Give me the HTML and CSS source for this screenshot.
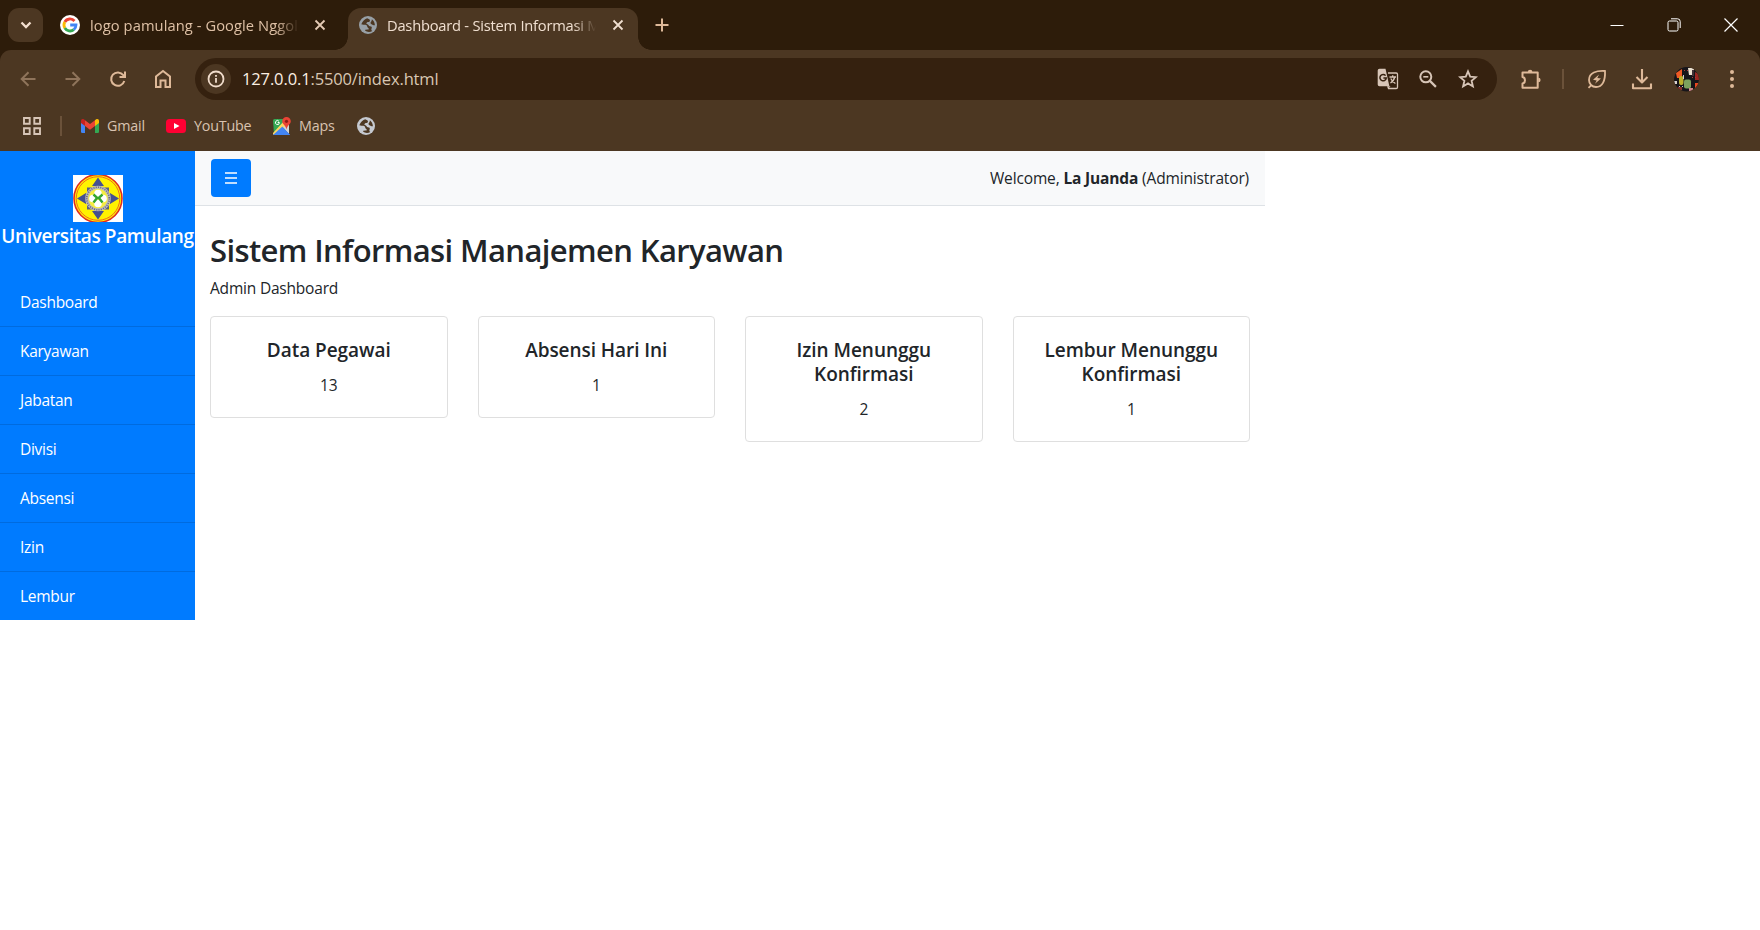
FILE: index.html
```
<!DOCTYPE html>
<html lang="id">
<head>
<meta charset="utf-8">
<title>Dashboard - Sistem Informasi Manajemen Karyawan</title>
<link rel="stylesheet" href="styles.css">
</head>
<body>
<svg width="0" height="0" class="defs">
  <symbol id="globe" viewBox="0 0 18 18">
    <circle cx="9" cy="9" r="9" fill="currentColor"/>
    <path class="land" d="M8.200 2.200C6 3 3.600 4.800 2.300 8.200c1.600.9 3.600 0 5 .8 1.300.8.500 2.300 1.900 2.900.9.400.700 1.500-.2 1.700-1.500.1-2.400.1-3.100.7 1.900 1.900 5 2.300 7.400.6-1-.6-1.200-1.500-.7-2.500.700-1.300-.2-2.200-1.700-2.200-1.400 0-1.300-1.700-2.400-1.900-1-.2-1.700-.8-.6-1.800 1-.8 2.500-.2 3-1.500.300-1-.3-2-2.700-2.800z"/>
    <path class="land" d="M12.900 3.300c-.1 1.500-.5 2.400-1.300 3.200-.6.700.4 1.600 1.300 1.900 1 .3 1.500 1.200 3 .9-.1-2.500-1.200-4.600-3-6z"/>
  </symbol>
</svg>
<div class="browser">
  <div class="tabstrip">
    <div class="tab-search"><svg width="12" height="8" viewBox="0 0 12 8"><path d="M1.500 1.500 6 6l4.500-4.500" fill="none" stroke="#f3dfcf" stroke-width="2.300"/></svg></div>
    <div class="tab tab-back">
      <svg class="favicon" width="20" height="20" viewBox="0 0 20 20"><circle cx="10" cy="10" r="10" fill="#fff"/><g fill="none" stroke-width="2.800"><path d="M14.500 6A6 6 0 0 0 4.800 7" stroke="#ea4335"/><path d="M4.800 7a6 6 0 0 0 0 6" stroke="#fbbc05"/><path d="M4.800 13a6 6 0 0 0 9 1.600" stroke="#34a853"/><path d="M13.800 14.600A6 6 0 0 0 16 10h-5.800" stroke="#4285f4"/></g></svg>
      <span class="tab-title">logo pamulang - Google Nggoleki</span>
      <svg class="close" width="12" height="12" viewBox="0 0 12 12"><path d="m1.500 1.500 9 9m0-9-9 9" stroke="currentColor" stroke-width="1.800"/></svg>
    </div>
    <div class="tab tab-active">
      <svg class="favicon globe" width="18" height="18"><use href="#globe"/></svg>
      <span class="tab-title">Dashboard - Sistem Informasi Manajemen</span>
      <svg class="close" width="12" height="12" viewBox="0 0 12 12"><path d="m1.500 1.500 9 9m0-9-9 9" stroke="currentColor" stroke-width="1.800"/></svg>
    </div>
    <svg class="new-tab" width="14" height="14" viewBox="0 0 14 14"><path d="M7 .5v13M.5 7h13" stroke="#deb999" stroke-width="2"/></svg>
    <div class="window-controls">
      <div><svg width="14" height="14" viewBox="0 0 14 14"><path d="M.5 7.500h13" stroke="#fff"/></svg></div>
      <div><svg width="14" height="14" viewBox="0 0 14 14" fill="none" stroke="#fff"><rect x="1" y="3" width="10" height="10" rx="1.500"/><path d="M4 .8h6.500a2.700 2.700 0 0 1 2.700 2.700V10"/></svg></div>
      <div><svg width="14" height="14" viewBox="0 0 14 14"><path d="m.5.500 13 13m0-13-13 13" stroke="#fff" stroke-width="1.200"/></svg></div>
    </div>
  </div>

  <div class="toolbar">
    <div class="tool dim"><svg width="16" height="16" viewBox="0 0 16 16"><path d="M15.500 8H2M8.500 1.200 1.700 8l6.800 6.800"/></svg></div>
    <div class="tool dim"><svg width="16" height="16" viewBox="0 0 16 16"><path d="M.5 8H14M7.500 1.200 14.300 8l-6.800 6.800"/></svg></div>
    <div class="tool"><svg width="18" height="18" viewBox="0 0 18 18"><path d="M15.300 11A6.700 6.700 0 1 1 14.300 5.200L15.800 7M16 1.500V7h-5.500"/></svg></div>
    <div class="tool"><svg width="18" height="20" viewBox="0 0 18 20"><path d="M2 18V7.500L9 2l7 5.500V18h-4.500v-6.500h-5V18z"/></svg></div>
    <div class="omnibox">
      <div class="site-info"><svg width="18" height="18" viewBox="0 0 18 18"><circle cx="9" cy="9" r="7.500" fill="none" stroke="#f0dccb" stroke-width="1.800"/><path d="M9 8v4.800M9 4.900v1.800" stroke="#f0dccb" stroke-width="1.800"/></svg></div>
      <span class="url"><b>127.0.0.1</b>:5500/index.html</span>
      <div class="omni-tool"><svg width="22" height="22" viewBox="0 0 22 22"><path d="M11 5h8.200a1.300 1.300 0 0 1 1.300 1.300v12.900a1.300 1.300 0 0 1-1.300 1.300H11" fill="none" stroke="#d7c5b7" stroke-width="1.300"/><path d="M2.500.7h6l3.900 17.600H2.500A1.800 1.800 0 0 1 .7 16.500V2.500A1.800 1.800 0 0 1 2.500.7z" fill="#d7c5b7"/><path d="M10 18.300h3.500L11 21z" fill="#d7c5b7"/><path d="M8.600 7.600a3.200 3.200 0 1 0 .7 2.400H6.400" fill="none" stroke="#35210f" stroke-width="1.500"/><path d="M12.500 9h6.500M15.700 7.300V9M17.700 9c-.6 2.800-2.200 4.800-4.300 6M13.800 10.500c.9 2 2.400 3.800 4.600 5" fill="none" stroke="#d7c5b7" stroke-width="1.300"/></svg></div>
      <div class="omni-tool"><svg width="18" height="18" viewBox="0 0 18 18" fill="none" stroke="#d7c5b7"><circle cx="6.800" cy="6.800" r="5.500" stroke-width="2"/><path d="m10.900 10.900 6 6" stroke-width="2.200"/><path d="M4.300 6.800h5" stroke-width="1.600"/></svg></div>
      <div class="omni-tool"><svg width="20" height="20" viewBox="0 0 20 20"><path d="m10 2.300 2.200 5.300 5.700.5-4.300 3.700 1.300 5.600-4.900-3-4.900 3 1.300-5.600L2.100 8.100l5.700-.5z" fill="none" stroke="#d7c5b7" stroke-width="1.800"/></svg></div>
    </div>
    <div class="tool extensions"><svg width="22" height="22" viewBox="0 0 22 22"><path d="M2.500 4.500h15.200v15.200H2.500v-4.200c3.300-.6 3.300-6 0-6.600z" stroke-linejoin="round"/><path d="M7.800 4a2.300 2.300 0 0 1 4.600 0zM18.300 9.700a2.300 2.300 0 0 1 0 4.600z" fill="#deb999" stroke="none"/></svg></div>
    <div class="separator"></div>
    <div class="tool"><svg width="20" height="20" viewBox="0 0 20 20"><path d="M18 2C9.500 1.500 2 3.500 2 11c0 4 3 7 7 7 6.500 0 9.500-6.500 9-16zM1.500 18.800l3-2.800" stroke-width="1.800"/><path d="m12 5.500-6 5.300 3.700.6L8 14.800l6-5.300-3.700-.6z" fill="#deb999" stroke="none"/></svg></div>
    <div class="tool"><svg width="22" height="22" viewBox="0 0 22 22"><path d="M11 1v13M5.500 9l5.500 5.500L16.500 9M2 15.500v4.800h18v-4.800" stroke-width="2.100" stroke-linejoin="round"/></svg></div>
    <div class="tool"><svg class="avatar" width="25" height="25" viewBox="0 0 25 25" stroke="none"><rect width="25" height="25" fill="#17151a"/><path d="M2 6 8 2v9H3z" fill="#ee5a24"/><path d="M14 1h6v7h-5z" fill="#eee3d2"/><path d="M21 5l4 2v6h-4z" fill="#9b2722"/><rect x="5" y="9" width="4.500" height="9" rx="2" fill="#bcae2c"/><rect x="10" y="12.500" width="7" height="9" rx="2" fill="#7da15e"/><path d="M21 16h4v4l-4 3z" fill="#e84820"/><path d="M0 14h3v3H0z" fill="#d8d2cf"/><path d="M4 20h4v3H4z" fill="#8f302d"/><path d="M15 21h4v3h-4z" fill="#d0878a"/><path d="M18 3h2v6h-2z" fill="#413238"/><path d="M10 3h1v1h-1zm3 0h1v1h-1zM18 10h1v1h-1zm3 0h1v1h-1z" fill="#a93736"/><path d="M9 8h1v4H9zM5 19h1v1H5zm3 0h1v1H8z" fill="#ccc"/></svg></div>
    <div class="tool"><svg width="4" height="18" viewBox="0 0 4 18" fill="#deb999" stroke="none"><circle cx="2" cy="2" r="2"/><circle cx="2" cy="9" r="2"/><circle cx="2" cy="16" r="2"/></svg></div>
  </div>

  <div class="bookmarks">
    <svg class="apps" width="18" height="18" viewBox="0 0 18 18" fill="none" stroke="#d7c5b7" stroke-width="1.900"><path d="M1 1h5.700v5.700H1zM11.300 1H17v5.700h-5.700zM1 11.300h5.700V17H1zM11.300 11.300H17V17h-5.700z"/></svg>
    <div class="separator"></div>
    <div class="bookmark gmail"><svg width="18" height="14" viewBox="0 0 18 14"><path d="M0 2v10.700A1.300 1.300 0 0 0 1.300 14H4V5z" fill="#4285f4"/><path d="M18 2v10.700a1.300 1.300 0 0 1-1.300 1.300H14V5z" fill="#34a853"/><path d="M14 1.200V7l4-3V1.900C18 .2 16.100-.6 14.800.4z" fill="#fbbc04"/><path d="M4 7V1.200l5 3.700 5-3.700V7l-5 3.800z" fill="#ea4335"/><path d="M0 1.900V4l4 3V1.200L3.200.4C1.900-.6 0 .2 0 1.900z" fill="#c5221f"/></svg>Gmail</div>
    <div class="bookmark youtube"><svg width="20" height="14" viewBox="0 0 20 14"><rect width="20" height="14" rx="3.500" fill="#ff0033"/><path d="m8 4 5.500 3L8 10z" fill="#fff"/></svg>YouTube</div>
    <div class="bookmark maps"><svg width="18" height="19" viewBox="0 0 18 19"><path d="M0 3.500A1.500 1.500 0 0 1 1.500 2H14L1 17z" fill="#34a853"/><path d="M16 6v11L9.500 10z" fill="#cfd4d8"/><path d="m1 18 8-8 8 8z" fill="#4285f4"/><path d="M0 16 12 3l3 3L3 18H1.500A1.500 1.500 0 0 1 0 16z" fill="#fdd663"/><path d="m0 18 9.300-8.500L17 18z" fill="#4285f4"/><path d="M6.500 5.500H4.700M5.900 4.200a2 2 0 1 0 .5 1.600" fill="none" stroke="#fff"/><path d="M13.500 0A4.300 4.300 0 0 0 9.200 4.300c0 3 3.500 3.800 4.300 8.200.8-4.400 4.300-5.200 4.300-8.200A4.300 4.300 0 0 0 13.500 0z" fill="#ea4335"/><circle cx="13.500" cy="4.300" r="1.600" fill="#8c1c16"/></svg>Maps</div>
    <svg class="globe light" width="18" height="18"><use href="#globe"/></svg>
  </div>
</div>

<div class="page">
  <nav class="sidebar">
    <div class="brand">
      <svg width="50" height="47" viewBox="0 0 50 47"><rect width="50" height="47" fill="#fff"/><circle cx="25" cy="23.500" r="24" fill="#fff200" stroke="#e02b20" stroke-width="1.600"/><circle cx="25" cy="23.500" r="21.800" fill="none" stroke="#ee5a24" stroke-width=".9"/><path d="M25 2.500 31 11H19zM25 44.500 31 36H19zM4 23.500 13 18v11zM46 23.500 37 18v11z" fill="#46508f"/><path d="M14 12.500h7l-7 7zM36 12.500h-7l7 7zM14 34.500h7l-7-7zM36 34.500h-7l7-7z" fill="#5a5f7d"/><circle cx="25" cy="23.500" r="11.300" fill="#f5ec42" stroke="#b8b7bd" stroke-width="3"/><circle cx="25" cy="23.500" r="11.300" fill="none" stroke="#6d6a78" stroke-width="1.600" stroke-dasharray="1 1.300"/><g fill="#fff"><circle cx="25" cy="18.500" r="3.800"/><circle cx="25" cy="28.500" r="3.800"/><circle cx="20" cy="23.500" r="3.800"/><circle cx="30" cy="23.500" r="3.800"/></g><path d="m20.500 19.500 3.700 3.300-3.700 4.700M29.500 19.500l-3.700 3.300 3.700 4.700" fill="none" stroke="#35a62d" stroke-width="2.400"/></svg>
      <h5>Universitas Pamulang</h5>
    </div>
    <a>Dashboard</a>
    <a>Karyawan</a>
    <a>Jabatan</a>
    <a>Divisi</a>
    <a>Absensi</a>
    <a>Izin</a>
    <a>Lembur</a>
  </nav>
  <main class="content">
    <header class="navbar">
      <button class="menu-toggle"><svg width="12" height="12" viewBox="0 0 12 12"><path d="M0 1h12M0 6h12M0 11h12" stroke="#fff" stroke-width="1.300"/></svg></button>
      <div class="welcome">Welcome, <b>La Juanda</b> (Administrator)</div>
    </header>
    <section class="container">
      <h1>Sistem Informasi Manajemen Karyawan</h1>
      <p class="subtitle">Admin Dashboard</p>
      <div class="cards">
        <div class="card"><h5>Data Pegawai</h5><p>13</p></div>
        <div class="card"><h5>Absensi Hari Ini</h5><p>1</p></div>
        <div class="card"><h5>Izin Menunggu Konfirmasi</h5><p>2</p></div>
        <div class="card"><h5>Lembur Menunggu Konfirmasi</h5><p>1</p></div>
      </div>
    </section>
  </main>
</div>
</body>
</html>
```
FILE: styles.css
```
* { box-sizing: border-box; }
body { margin: 0; height: 930px; overflow: hidden; background: #fff; font-family: "Open Sans", "Noto Sans", sans-serif; font-size: 15.5px; line-height: 24px; letter-spacing: -.2px; color: #212529; }
svg { display: block; flex: none; }
h1, h5, p { margin: 0; }
.defs { position: absolute; }

.browser { background: #2d1c0a; }
.tabstrip { display: flex; height: 50px; padding-left: 8px; }
.tab-search { display: flex; align-items: center; justify-content: center; width: 35px; height: 34px; margin-top: 8px; border-radius: 11px; background: #4c3722; }
.tab { display: flex; align-items: center; height: 42px; margin-top: 8px; padding-bottom: 8px; font-size: 14.7px; }
.tab-back { width: 287px; margin-left: 17px; color: #dec0a5; letter-spacing: .08px; }
.tab-title { flex: none; width: 209px; overflow: hidden; white-space: nowrap; -webkit-mask-image: linear-gradient(90deg, #000 186px, transparent 209px); mask-image: linear-gradient(90deg, #000 186px, transparent 209px); }
.tab-back .tab-title { margin: 0 15px 0 10px; }
.tab-back .close { color: #e5cbb5; }
.tab-active { position: relative; width: 290px; margin-left: 1px; padding-left: 11px; border-radius: 13px 13px 0 0; background: #4c3722; color: #f0dfd0; letter-spacing: -.23px; }
.tab-active .tab-title { margin: 0 16px 0 10px; }
.tab-active::before, .tab-active::after { content: ""; position: absolute; bottom: 0; width: 13px; height: 13px; }
.tab-active::before { left: -13px; background: radial-gradient(circle at 0 0, transparent 12.5px, #4c3722 13px); }
.tab-active::after { right: -13px; background: radial-gradient(circle at 100% 0, transparent 12.5px, #4c3722 13px); }
.globe { color: #98a0a6; }
.globe.light { color: #c5c9d0; }
.land { fill: #4c3722; }
.new-tab { margin: 18px 0 0 17px; }
.window-controls { display: flex; margin-left: auto; padding-right: 1px; }
.window-controls div { display: flex; align-items: center; justify-content: center; width: 57px; height: 49px; }

.toolbar { display: flex; align-items: center; height: 58px; padding: 0 5px; border-radius: 11px 11px 0 0; background: #4c3722; }
.tool { display: flex; align-items: center; justify-content: center; width: 45px; height: 45px; fill: none; stroke: #deb999; stroke-width: 2; }
.dim { stroke: #8f745b; }
.avatar { border-radius: 50%; overflow: hidden; clip-path: circle(12.5px); }
.omnibox { display: flex; align-items: center; width: 1302px; height: 42px; margin-left: 10px; padding: 0 9px 0 6px; border-radius: 21px; background: #35210f; }
.site-info { display: flex; align-items: center; justify-content: center; width: 30px; height: 30px; border-radius: 15px; background: #4c3722; }
.url { margin: 0 auto 0 11px; font-size: 16.5px; letter-spacing: -.13px; color: #d9c7b3; }
.url b { font-weight: 400; color: #fbefe3; }
.omni-tool { display: flex; align-items: center; justify-content: center; width: 40px; height: 40px; }
.extensions { margin-left: 11px; }
.separator { width: 2px; height: 20px; background: #6b523a; }
.toolbar .separator { margin: 0 10px 0 9px; }

.bookmarks { display: flex; align-items: center; height: 43px; padding: 0 0 7px 23px; background: #4c3722; color: #d9c3b0; font-size: 14.3px; letter-spacing: -.2px; }
.bookmarks .separator { margin: 0 19px 0 19px; }
.bookmark { display: flex; align-items: center; gap: 8px; }
.gmail { width: 85px; }
.youtube { width: 107px; }
.maps { width: 84px; }

.page { display: flex; align-items: flex-start; width: 1265px; }
.sidebar { display: flex; flex-direction: column; width: 195px; flex: none; height: 469px; background: #007bff; color: #fff; }
.brand { display: flex; flex-direction: column; align-items: center; height: 127px; padding-top: 24px; }
.brand h5 { margin-top: 2px; font-size: 19px; font-weight: 650; letter-spacing: -.38px; line-height: 24px; white-space: nowrap; }
.sidebar a { height: 49px; padding: 12px 20px; border-bottom: 1px solid rgba(0, 0, 0, .125); letter-spacing: -.28px; }
.sidebar a:last-child { height: 48px; border-bottom: 0; }
.content { flex: 1; }
.navbar { display: flex; align-items: center; justify-content: space-between; height: 55px; padding: 0 16px; border-bottom: 1px solid #dee2e6; background: #f8f9fa; }
.menu-toggle { display: flex; align-items: center; justify-content: center; width: 40px; height: 38px; padding: 0; border: 0; border-radius: 4px; background: #007bff; }
.welcome { letter-spacing: -.15px; }
.container { padding: 25px 15px 0; }
.container h1 { margin-bottom: 7px; font-size: 31px; font-weight: 600; line-height: 38.4px; letter-spacing: -.62px; }
.cards { display: grid; grid-template-columns: repeat(4, 1fr); gap: 30px; align-items: start; margin-top: 16px; }
.card { padding: 20px; border: 1px solid #dfdfdf; border-radius: 4px; text-align: center; }
.card h5 { padding-top: 1px; margin-bottom: 11px; font-size: 19px; font-weight: 600; line-height: 24px; letter-spacing: -.05px; }
```
